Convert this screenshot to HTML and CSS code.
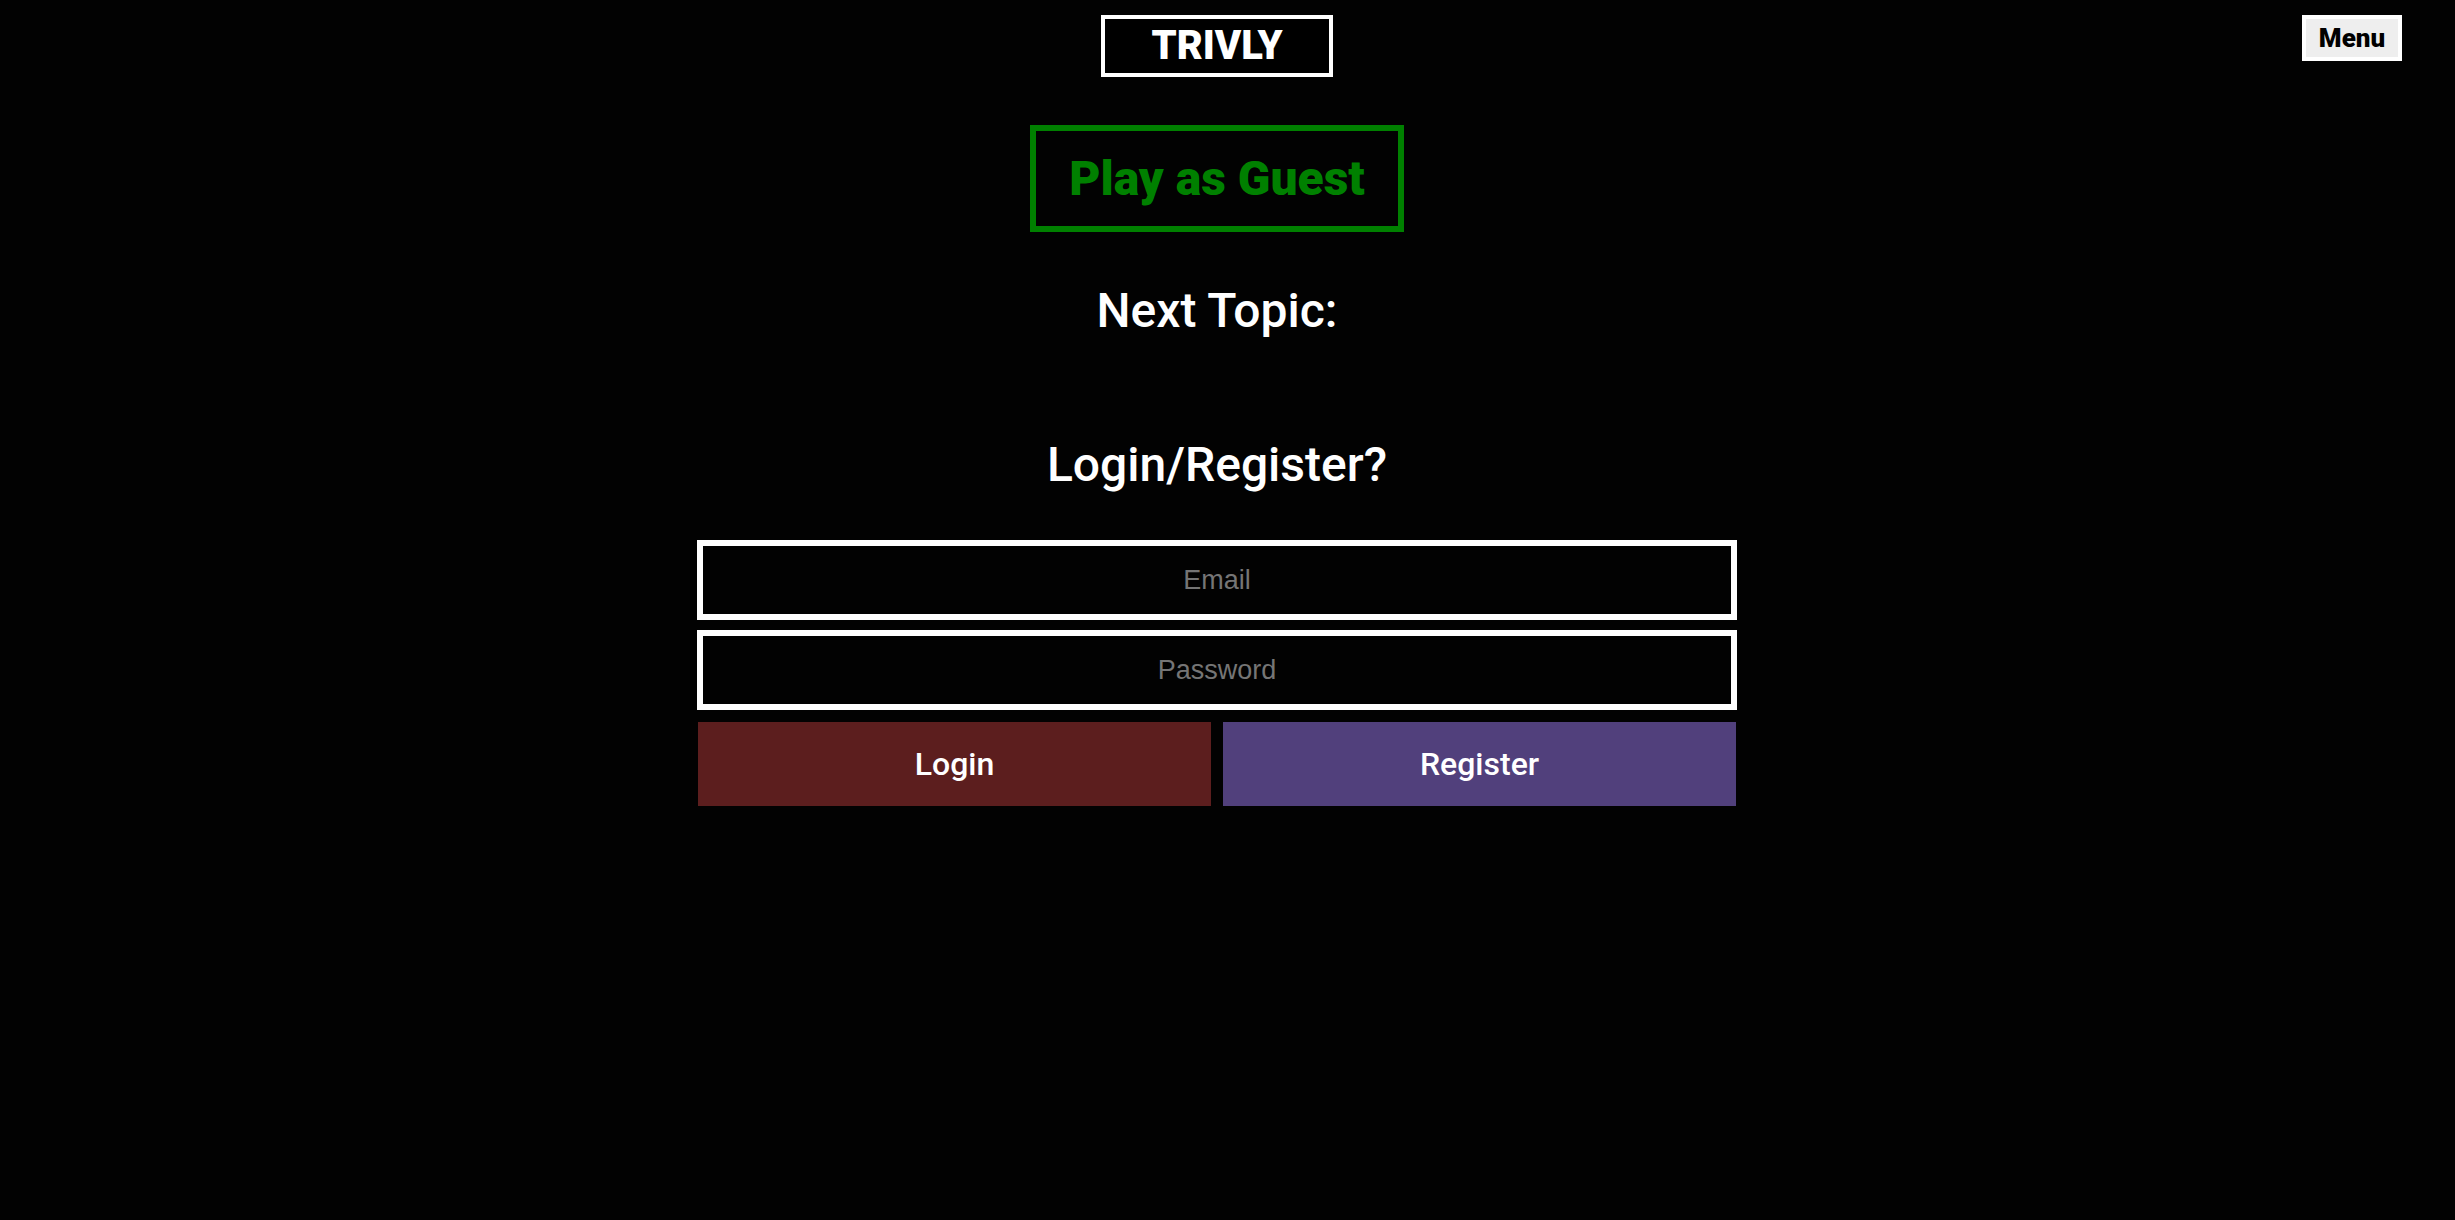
FILE: index.html
```html
<!DOCTYPE html>
<html lang="en">
<head>
<meta charset="utf-8">
<meta name="viewport" content="width=device-width, initial-scale=1">
<title>Trivly</title>
<link rel="stylesheet" href="styles.css">
</head>
<body>
<header class="header">
  <a class="logo" href="#">TRIVLY</a>
  <button class="menu" type="button">Menu</button>
</header>
<main class="main">
  <button class="guest" type="button">Play as Guest</button>
  <h2 class="heading topic">Next Topic:</h2>
  <h2 class="heading">Login/Register?</h2>
  <form class="form">
    <input class="field" type="email" placeholder="Email" aria-label="Email">
    <input class="field" type="password" placeholder="Password" aria-label="Password">
    <div class="actions">
      <button class="action login" type="button">Login</button>
      <button class="action register" type="button">Register</button>
    </div>
  </form>
</main>
</body>
</html>
```
FILE: styles.css
```css
* {
  box-sizing: border-box;
}

body {
  margin: 0;
  padding: 15px 53px 15px 32px;
  min-height: 100vh;
  background: #020202;
  color: #fff;
  font-family: Roboto, sans-serif;
}

.header {
  display: grid;
  grid-template-columns: 1fr auto 1fr;
  align-items: start;
}

.logo {
  grid-column: 2;
  width: 232px;
  border: 4px solid #fff;
  background: #000;
  color: #fff;
  font-size: 40px;
  font-weight: 900;
  line-height: 54px;
  text-align: center;
  text-decoration: none;
}

.menu {
  justify-self: end;
  width: 100px;
  padding: 0;
  border: 4px solid #fff;
  background: #eee;
  color: #000;
  font-family: inherit;
  font-size: 26px;
  font-weight: 900;
  line-height: 38px;
}

.main {
  display: flex;
  flex-direction: column;
  align-items: center;
  padding-top: 48px;
}

.guest {
  width: 374px;
  padding: 0;
  border: 6px solid #008000;
  background: transparent;
  color: #008000;
  font-family: inherit;
  font-size: 48px;
  font-weight: 900;
  line-height: 95px;
}

.heading {
  margin: 50px 0 0;
  font-size: 48px;
  font-weight: 500;
  line-height: 58px;
}

.topic {
  margin-bottom: 46px;
}

.form {
  display: flex;
  flex-direction: column;
  gap: 10px;
  width: 100%;
  max-width: 1040px;
  margin-top: 46px;
}

.field {
  width: 100%;
  height: 80px;
  padding: 0 20px;
  border: 6px solid #fff;
  border-radius: 0;
  background: transparent;
  color: #fff;
  font-family: "Liberation Sans", sans-serif;
  font-size: 27px;
  text-align: center;
}

.field::placeholder {
  color: #757575;
}

.actions {
  display: grid;
  grid-template-columns: 1fr 1fr;
  gap: 12px;
  padding: 2px 1px;
}

.action {
  padding: 0;
  border: 0;
  color: #fff;
  font-family: inherit;
  font-size: 32px;
  font-weight: 500;
  line-height: 84px;
}

.login {
  background: #5c1e1e;
}

.register {
  background: #51407c;
}
```
